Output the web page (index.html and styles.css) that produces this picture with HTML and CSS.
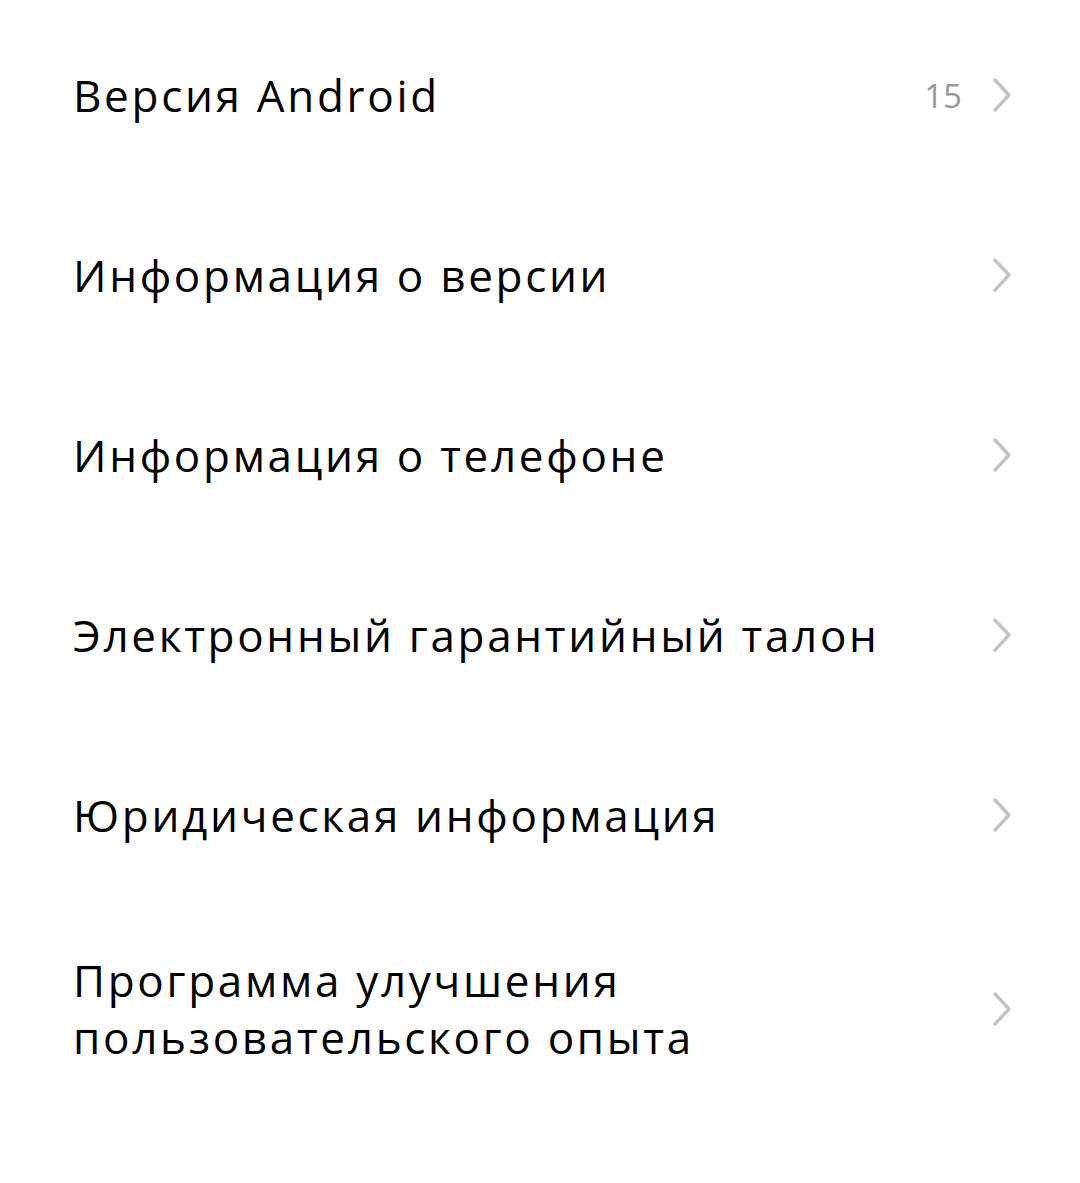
FILE: index.html
```html
<!DOCTYPE html>
<html lang="ru">
<head>
    <meta charset="UTF-8">
    <meta name="viewport" content="width=device-width, initial-scale=1.0">
    <title>О телефоне</title>
    <link rel="stylesheet" href="styles.css">
</head>
<body>

    <ul class="settings">
        <li class="row">
            <span class="label">Версия Android</span>
            <span class="value">15</span>
            <svg class="chevron" viewBox="0 0 20 36"><path d="M3 3 L17 18 L3 33"/></svg>
        </li>
        <li class="row">
            <span class="label">Информация о версии</span>
            <svg class="chevron" viewBox="0 0 20 36"><path d="M3 3 L17 18 L3 33"/></svg>
        </li>
        <li class="row">
            <span class="label">Информация о телефоне</span>
            <svg class="chevron" viewBox="0 0 20 36"><path d="M3 3 L17 18 L3 33"/></svg>
        </li>
        <li class="row">
            <span class="label">Электронный гарантийный талон</span>
            <svg class="chevron" viewBox="0 0 20 36"><path d="M3 3 L17 18 L3 33"/></svg>
        </li>
        <li class="row">
            <span class="label">Юридическая информация</span>
            <svg class="chevron" viewBox="0 0 20 36"><path d="M3 3 L17 18 L3 33"/></svg>
        </li>
        <li class="row">
            <span class="label">Программа улучшения<br>пользовательского опыта</span>
            <svg class="chevron" viewBox="0 0 20 36"><path d="M3 3 L17 18 L3 33"/></svg>
        </li>
    </ul>

</body>
</html>
```

FILE: styles.css
```css
/* Экран «О телефоне» */
body { margin: 0; background: #fff; font-family: "Open Sans", "Noto Sans", sans-serif; color: #000; }
.settings { list-style: none; margin: 0; padding: 5px 68px 0 73px; }
.row { display: flex; align-items: center; min-height: 180px; padding: 47px 0; box-sizing: border-box; }
.label { flex: 1; font-size: 44px; line-height: 57px; letter-spacing: 2.7px; }
.value { font-size: 33px; color: #999; margin-right: 30px; }
.chevron { width: 20px; height: 36px; fill: none; stroke: #c4c4c4; stroke-width: 3.5; stroke-linecap: round; stroke-linejoin: round; }
```
